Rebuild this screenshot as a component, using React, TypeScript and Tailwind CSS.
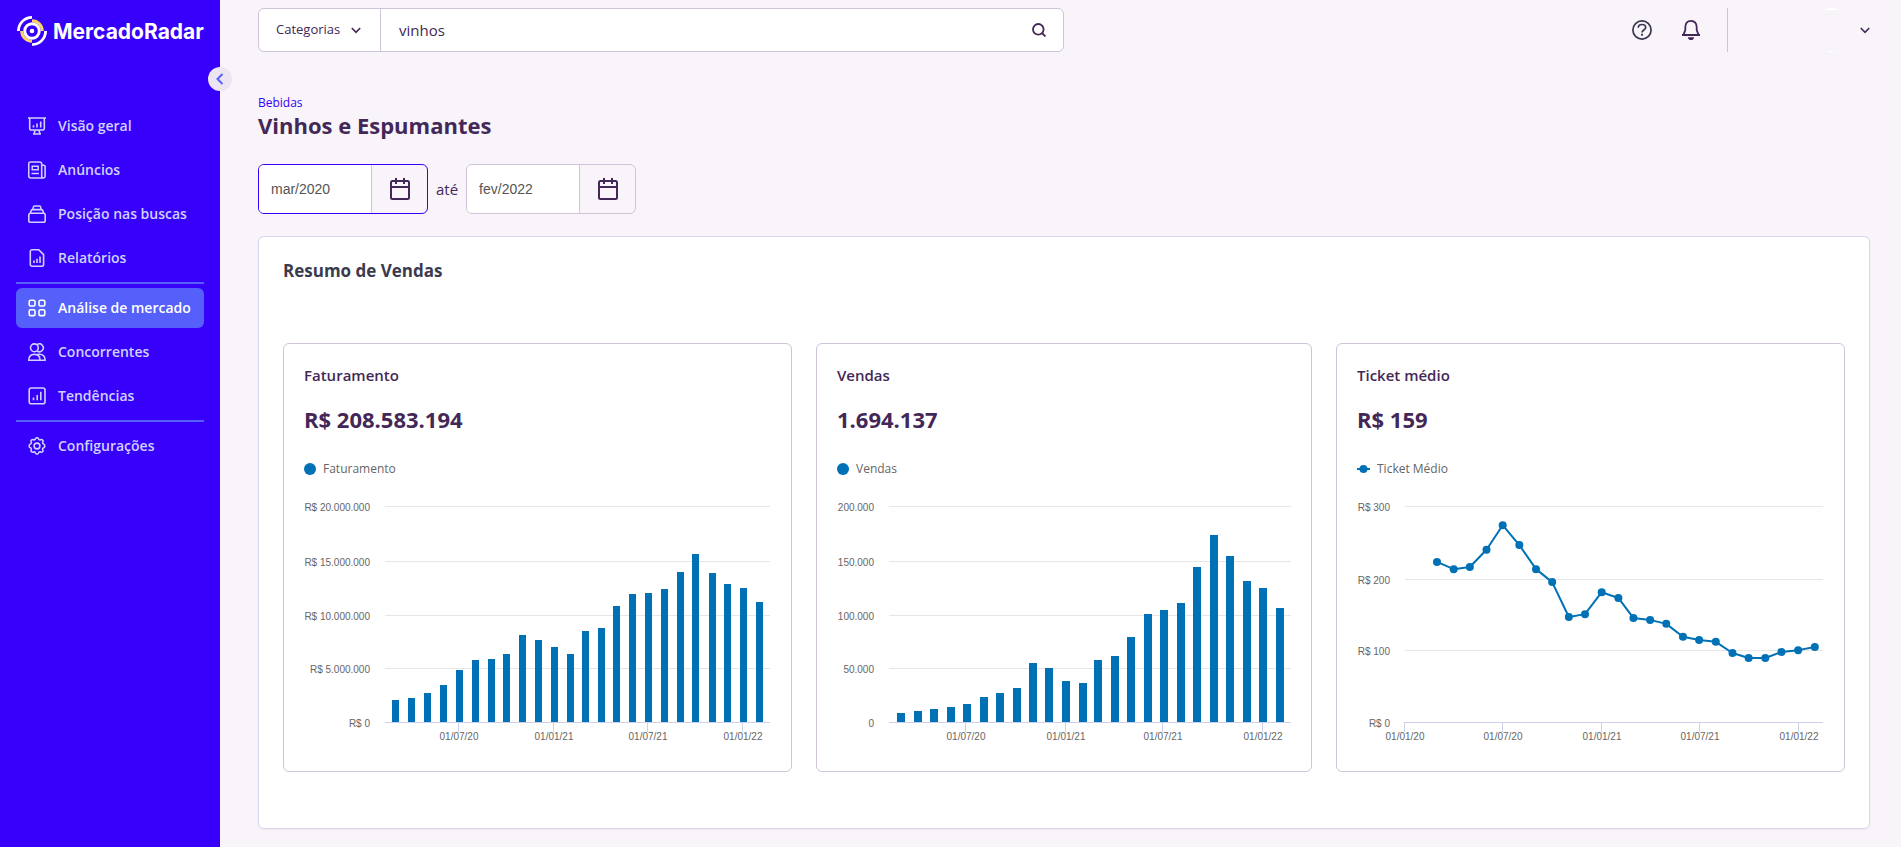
import type { ReactNode } from "react";

type NavItem = { label: string; icon: ReactNode; active?: boolean };

const navGroups: NavItem[][] = [
  [
    {
      label: "Visão geral",
      icon: (
        <>
          <path d="M0 1h18M1.7 1v10.6a1.4 1.4 0 0 0 1.4 1.4h11.8a1.4 1.4 0 0 0 1.4-1.4V1" />
          <path d="M5.5 8.2v2.2M9 6.5v3.900M12.7 4.500v5.900" />
          <path d="M7.2 13.2 6 16.8M10.8 13.2l1.2 3.6M5 17h8" />
        </>
      ),
    },
    {
      label: "Anúncios",
      icon: (
        <>
          <path d="M15.2 17H2.6A1.9 1.9 0 0 1 .7 15.1V2.9A1.9 1.9 0 0 1 2.6 1h9.2a1.9 1.9 0 0 1 1.9 1.9v12.4a1.7 1.7 0 0 0 3.4 0V5.6a1.4 1.4 0 0 0-1.4-1.4h-2" />
          <path d="M4.2 5.2h6v3.600h-6zM3.500 12.500h7.400" strokeWidth="1.5" />
        </>
      ),
    },
    {
      label: "Posição nas buscas",
      icon: (
        <>
          <rect x="0.8" y="8.2" width="16.4" height="9" rx="1.8" />
          <path d="M2.4 8.2 3.2 5.6a1.4 1.4 0 0 1 1.3-1h9a1.4 1.4 0 0 1 1.3 1l.8 2.6M4.8 4.4l.5-2.2A1.4 1.4 0 0 1 6.6 1h4.8a1.4 1.4 0 0 1 1.3 1.2l.5 2.2" />
        </>
      ),
    },
    {
      label: "Relatórios",
      icon: (
        <>
          <path d="M3.8.8h6.9l4.9 4.9v9.8a1.7 1.7 0 0 1-1.7 1.7H4a1.7 1.7 0 0 1-1.7-1.7V2.5A1.7 1.7 0 0 1 3.8.8z" />
          <path d="M6 11.5v2.6M9 9.8v4.3M12 7.6v6.5" />
        </>
      ),
    },
  ],
  [
    {
      label: "Análise de mercado",
      active: true,
      icon: (
        <>
          <rect x="1.2" y="1.2" width="5.8" height="5.8" rx="1.4" />
          <rect x="11" y="1.2" width="5.8" height="5.8" rx="1.4" />
          <rect x="1.2" y="10.8" width="5.8" height="5.8" rx="1.4" />
          <rect x="11" y="10.8" width="5.8" height="5.8" rx="1.4" />
        </>
      ),
    },
    {
      label: "Concorrentes",
      icon: (
        <>
          <circle cx="6.4" cy="4.8" r="3.9" />
          <path d="M9 1.7a3.9 3.9 0 1 1 0 6.2" />
          <path d="M.8 17.2c0-3.6 2-5.8 5.6-5.8s5.6 2.2 5.6 5.8zM9 11.6c.8-.2 1.5-.3 2.2-.3 3.6 0 5.9 2.3 5.9 5.9H12" />
        </>
      ),
    },
    {
      label: "Tendências",
      icon: (
        <>
          <rect x="1.2" y="1" width="15.8" height="15.8" rx="2" />
          <path d="M5.5 10.4v2.8M9.2 8v5.2M12.8 4.8v8.4" />
        </>
      ),
    },
  ],
  [
    {
      label: "Configurações",
      icon: (
        <>
          <circle cx="9" cy="9" r="2.9" />
          <path d="M7.4 1.9c.4-1.5 2.8-1.5 3.2 0 .2.9 1.2 1.3 2 .8 1.4-.8 3 .8 2.2 2.2-.4.8 0 1.8.8 2.1 1.6.4 1.6 3.4 0 3.8-.9.2-1.3 1.2-.8 2 .8 1.4-.8 3-2.2 2.2-.8-.4-1.8 0-2 .9-.4 1.6-2.8 1.6-3.2 0-.2-.9-1.2-1.3-2-.9-1.4.8-3-.8-2.2-2.2.4-.8 0-1.8-.8-2-1.6-.4-1.6-3.4 0-3.8.9-.2 1.3-1.2.8-2.1C2.4 3.5 4 1.9 5.4 2.7c.8.5 1.8.1 2-.8z" />
        </>
      ),
    },
  ],
];

const months = Array.from({ length: 24 }, (_, i) => Date.UTC(2020, 2 + i, 1));
const daysSinceStart = (time: number) => (time - months[0]) / 86400000;

const yearTicks = [
  { label: "01/07/20", day: daysSinceStart(Date.UTC(2020, 6, 1)) },
  { label: "01/01/21", day: daysSinceStart(Date.UTC(2021, 0, 1)) },
  { label: "01/07/21", day: daysSinceStart(Date.UTC(2021, 6, 1)) },
  { label: "01/01/22", day: daysSinceStart(Date.UTC(2022, 0, 1)) },
];

type ChartProps = {
  name: string;
  kind: "bar" | "line";
  width: number;
  left: number;
  right: number;
  start: number;
  perDay: number;
  barWidth?: number;
  max: number;
  yTicks: { label: string; y: number }[];
  xTicks: { label: string; day: number }[];
  values: number[];
};

const BASE = 226;
const PLOT_HEIGHT = 216;

const faturamento: ChartProps = {
  name: "Faturamento",
  kind: "bar",
  width: 467,
  left: 81,
  right: 466,
  start: 91.8,
  perDay: 0.5184,
  barWidth: 7,
  max: 20,
  yTicks: [
    { label: "R$ 20.000.000", y: 10 },
    { label: "R$ 15.000.000", y: 65 },
    { label: "R$ 10.000.000", y: 119 },
    { label: "R$ 5.000.000", y: 172 },
    { label: "R$ 0", y: 226 },
  ],
  xTicks: yearTicks,
  values: [
    2.05, 2.22, 2.7, 3.43, 4.8, 5.75, 5.85, 6.3, 8.05, 7.6, 6.95, 6.3,
    8.45, 8.7, 10.75, 11.85, 11.95, 12.3, 13.9, 15.55, 13.8, 12.8, 12.4, 11.1,
  ],
};

const vendas: ChartProps = {
  name: "Vendas",
  kind: "bar",
  width: 454,
  left: 52,
  right: 454,
  start: 64,
  perDay: 0.5399,
  barWidth: 8,
  max: 200,
  yTicks: [
    { label: "200.000", y: 10 },
    { label: "150.000", y: 65 },
    { label: "100.000", y: 119 },
    { label: "50.000", y: 172 },
    { label: "0", y: 226 },
  ],
  xTicks: yearTicks,
  values: [
    8.3, 10.2, 12, 13.9, 16.7, 23.1, 26.9, 31.5, 54.6, 50, 38, 36.1,
    57.4, 61.1, 78.7, 100, 103.7, 110.2, 143.5, 173.1, 153.7, 130.6, 124.1, 105.6,
  ],
};

const ticketMedio: ChartProps = {
  name: "Ticket Médio",
  kind: "line",
  width: 467,
  left: 48,
  right: 466,
  start: 80,
  perDay: 0.5382,
  max: 300,
  yTicks: [
    { label: "R$ 300", y: 10 },
    { label: "R$ 200", y: 83 },
    { label: "R$ 100", y: 154 },
    { label: "R$ 0", y: 226 },
  ],
  xTicks: [
    { label: "01/01/20", day: daysSinceStart(Date.UTC(2020, 0, 1)) },
    ...yearTicks,
  ],
  values: [
    223, 213, 216, 240, 274, 246.5, 213, 195, 146.5, 150.5, 181, 173,
    145, 142.5, 137, 119, 114.5, 112, 96.5, 89.5, 89.5, 98, 100.5, 105,
  ],
};

function Chart(props: ChartProps) {
  const { name, kind, width, left, right, start, perDay, barWidth = 8, max, yTicks, xTicks, values } = props;

  const points = values.map((value, i) => ({
    x: start + daysSinceStart(months[i]) * perDay,
    h: (value / max) * PLOT_HEIGHT,
  }));
  const tickStart = kind === "bar" ? start - 1 : start;

  return (
    <svg
      role="img"
      aria-label={name}
      viewBox={`0 0 ${width} 255`}
      className="mt-[19px] block w-full overflow-visible font-['Liberation_Sans',sans-serif] text-[10px]"
    >
      {yTicks.map((tick) => (
        <g key={tick.label}>
          <rect x={left} y={tick.y} width={right - left} height="1" fill={tick.y === BASE ? "#ccd0eb" : "#e6e6e6"} />
          <text x={left - 15} y={tick.y + 5} textAnchor="end" fill="#666666">
            {tick.label}
          </text>
        </g>
      ))}
      {xTicks.map((tick) => {
        const x = Math.floor(tickStart + tick.day * perDay);
        return (
          <g key={tick.label}>
            <rect x={x} y={BASE} width="1" height="10" fill="#ccd0eb" />
            <text x={x + 1} y="244" textAnchor="middle" fill="#666666">
              {tick.label}
            </text>
          </g>
        );
      })}
      {kind === "bar" &&
        points.map((p) => (
          <rect
            key={p.x}
            x={Math.round(p.x - barWidth / 2)}
            y={BASE - Math.round(p.h)}
            width={barWidth}
            height={Math.round(p.h)}
            fill="#0071b5"
          />
        ))}
      {kind === "line" && (
        <>
          <polyline
            points={points.map((p) => `${p.x},${BASE + 0.5 - p.h}`).join(" ")}
            fill="none"
            stroke="#0071b5"
            strokeWidth="2"
            strokeLinejoin="round"
          />
          {points.map((p) => (
            <circle key={p.x} cx={p.x} cy={BASE + 0.5 - p.h} r="4" fill="#0071b5" />
          ))}
        </>
      )}
    </svg>
  );
}

function MetricCard({ title, value, chart }: { title: string; value: string; chart: ChartProps }) {
  return (
    <article className="min-w-0 rounded-md border border-[#cfc4d8] bg-white px-5 pt-[19px] pb-5 text-[#432857]">
      <h3 className="text-[15px] leading-6 font-semibold">{title}</h3>
      <p className="mt-4 text-[22px] leading-8 font-bold">{value}</p>
      <div className="mt-[26px] flex h-4 items-center gap-[7px] text-xs text-[#666666]">
        {chart.kind === "bar" ? (
          <span className="size-3 rounded-full bg-[#0071b5]" />
        ) : (
          <svg width="13" height="8" viewBox="0 0 13 8" fill="#0071b5">
            <rect y="3" width="13" height="2" />
            <circle cx="6.5" cy="4" r="4" />
          </svg>
        )}
        {chart.name}
      </div>
      <Chart {...chart} />
    </article>
  );
}

function Chevron() {
  return (
    <svg width="10" height="7" viewBox="0 0 10 7" fill="none" stroke="#432857" strokeWidth="1.6">
      <path d="M.8 1 5 5.3 9.2 1" />
    </svg>
  );
}

function Sidebar() {
  return (
    <aside className="relative w-[220px] shrink-0 bg-[#3700fa] px-4 pt-4">
      <a href="#" className="ml-px flex h-[30px] items-center gap-1.5 text-white">
        <svg width="30" height="30" viewBox="0 0 30 30" fill="none">
          <path d="M15 1.4A13.6 13.6 0 0 0 1.4 15M15 28.6A13.6 13.6 0 0 0 28.6 15" stroke="#fff" strokeWidth="2.8" />
          <path d="M15 4.7A10.3 10.3 0 0 1 25.3 15M15 25.3A10.3 10.3 0 0 1 4.7 15" stroke="#ffd166" strokeWidth="3" />
          <circle cx="15" cy="15" r="7.3" stroke="#fff" strokeWidth="2.9" />
          <circle cx="15" cy="15" r="2.3" fill="#fff" />
        </svg>
        <span className="font-['Inter',sans-serif] text-[21px] leading-none font-bold">MercadoRadar</span>
      </a>

      <button
        type="button"
        aria-label="Recolher menu"
        className="absolute top-[67px] -right-3 flex size-6 items-center justify-center rounded-full bg-[#ece6f2]"
      >
        <svg width="8" height="12" viewBox="0 0 8 12" fill="none" stroke="#5560fa" strokeWidth="2">
          <path d="M6.5 1 1.5 6l5 5" />
        </svg>
      </button>

      <nav className="mt-[60px] flex flex-col gap-1">
        {navGroups.map((group, i) => (
          <div key={i} className="flex flex-col gap-1">
            {i > 0 && <hr className="h-0.5 border-0 bg-[#5560fa]" />}
            {group.map((item) => (
              <a
                key={item.label}
                href="#"
                aria-current={item.active ? "page" : undefined}
                className={`flex h-10 items-center gap-3 rounded-md px-3 text-sm font-semibold whitespace-nowrap ${
                  item.active ? "bg-[#5560fa] text-white" : "text-[#cfd2ff]"
                }`}
              >
                <svg width="18" height="18" viewBox="0 0 18 18" fill="none" stroke="currentColor" strokeWidth="1.6" className="shrink-0">
                  {item.icon}
                </svg>
                {item.label}
              </a>
            ))}
          </div>
        ))}
      </nav>
    </aside>
  );
}

function Header() {
  return (
    <header className="flex h-11 items-center justify-between">
      <form className="flex h-full w-[806px] items-center rounded-md border border-[#cfc4d8] bg-white">
        <button
          type="button"
          className="flex h-full w-[122px] items-center justify-between border-r border-[#cfc4d8] pr-[19px] pl-[17px] text-[13px]"
        >
          Categorias
          <Chevron />
        </button>
        <input
          type="text"
          aria-label="Buscar"
          defaultValue="vinhos"
          className="h-full min-w-0 flex-1 px-[18px] text-[15px] outline-none"
        />
        <button type="submit" aria-label="Pesquisar" className="mr-[15px] p-0.5">
          <svg width="14" height="14" viewBox="0 0 14 14" fill="none" stroke="#432857" strokeWidth="1.8">
            <circle cx="6.3" cy="6.3" r="5.3" />
            <path d="m10 10 3.5 3.5" />
          </svg>
        </button>
      </form>

      <div className="flex h-full items-center">
        <button type="button" aria-label="Ajuda">
          <svg width="20" height="20" viewBox="0 0 20 20" fill="none" stroke="#3b3550" strokeWidth="1.7">
            <circle cx="10" cy="10" r="9.1" />
            <path d="M6.3 7.8C6.3 5.8 7.8 4.5 10 4.5s3.7 1.3 3.7 3.1c0 2.4-3.7 2.4-3.7 4.9" />
            <path d="M10 13.8v1.9" strokeWidth="1.9" />
          </svg>
        </button>
        <button type="button" aria-label="Notificações" className="ml-[30px]">
          <svg width="18" height="20" viewBox="0 0 18 20" fill="none" stroke="#432857" strokeWidth="1.8">
            <path d="M1.4 14.8 3.3 10V7.6C3.3 3.6 5.4.9 9 .9s5.7 2.7 5.7 6.7V10l1.9 4.8M0 15h18" />
            <path d="M6 17.2h6a3 2.8 0 0 1-6 0z" fill="#432857" stroke="none" />
          </svg>
        </button>
        <span className="ml-[27px] h-full w-px bg-[#cbc3d6]" />
        <button type="button" aria-label="Conta" className="ml-[81px] flex h-full items-center gap-[7px]">
          <span className="size-11 overflow-hidden rounded-full bg-white">
            <span className="mt-0.5 block h-[41px] bg-[#f8f4fa]" />
          </span>
          <Chevron />
        </button>
      </div>
    </header>
  );
}

function MonthField({ label, value, focused = false }: { label: string; value: string; focused?: boolean }) {
  return (
    <div
      className={`flex h-[50px] w-[170px] overflow-hidden rounded-md border ${
        focused ? "border-[#3700fa]" : "border-[#cfc4d8]"
      }`}
    >
      <input
        type="text"
        aria-label={label}
        defaultValue={value}
        className="min-w-0 flex-1 bg-white px-3 font-['Liberation_Sans',sans-serif] text-sm text-[#555555] outline-none"
      />
      <button
        type="button"
        aria-label={`Abrir calendário: ${label}`}
        className="flex w-14 items-center justify-center border-l border-[#cfc4d8]"
      >
        <svg width="20" height="22" viewBox="0 0 20 22" fill="none" stroke="#432857" strokeWidth="2">
          <rect x="1" y="3" width="18" height="18" rx="1.5" />
          <path d="M1 9h18M6 0v6M14 0v6" />
        </svg>
      </button>
    </div>
  );
}

export default function App() {
  return (
    <div className="flex min-h-screen bg-[#f8f4fa] font-['Open_Sans',sans-serif] text-[#432857]">
      <Sidebar />

      <main className="min-w-0 flex-1 pt-2 pr-[31px] pb-[18px] pl-[38px]">
        <Header />

        <div className="mt-[43px]">
          <a href="#" className="block w-fit text-xs leading-4 text-[#3700fa]">
            Bebidas
          </a>
          <h1 className="text-[22px] leading-7 font-bold">Vinhos e Espumantes</h1>
        </div>

        <div className="mt-[25px] flex items-center gap-2 text-[15px]">
          <MonthField label="Data inicial" value="mar/2020" focused />
          <span>até</span>
          <MonthField label="Data final" value="fev/2022" />
        </div>

        <section className="mt-[22px] rounded-md border border-[#d8d6ec] bg-white px-6 pt-6 pb-14 shadow-xs">
          <h2 className="text-[17px] leading-5 font-bold text-[#3b3b4f]">Resumo de Vendas</h2>
          <div className="mt-[62px] grid grid-cols-[509fr_496fr_509fr] gap-6">
            <MetricCard title="Faturamento" value="R$ 208.583.194" chart={faturamento} />
            <MetricCard title="Vendas" value="1.694.137" chart={vendas} />
            <MetricCard title="Ticket médio" value="R$ 159" chart={ticketMedio} />
          </div>
        </section>
      </main>
    </div>
  );
}
